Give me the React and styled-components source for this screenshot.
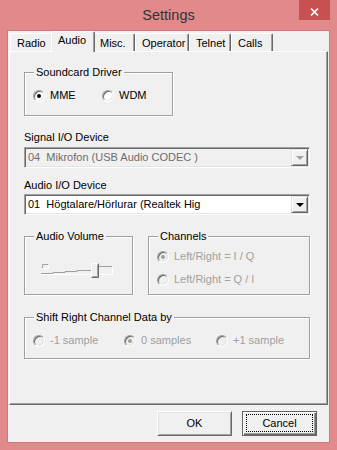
import React from 'react'
import styled, { createGlobalStyle } from 'styled-components'

const GlobalStyle = createGlobalStyle`
  html, body {
    margin: 0;
    padding: 0;
    background: #e1898b;
  }
  * {
    box-sizing: border-box;
  }
`

const Window = styled.div`
  width: 337px;
  height: 450px;
  display: flex;
  flex-direction: column;
  padding: 0 8px 8px 8px;
  background: #e1898b;
  font-family: "Liberation Sans", Arial, sans-serif;
  font-size: 11px;
  color: #000;
`

const TitleBar = styled.div`
  height: 31px;
  display: grid;
  grid-template-columns: 1fr auto 1fr;
  align-items: start;
`

const Title = styled.div`
  grid-column: 2;
  font-size: 14.5px;
  line-height: 17px;
  padding-top: 7px;
  color: #333;
`

const CloseButton = styled.div`
  grid-column: 3;
  justify-self: end;
  margin-right: -1px;
  width: 31px;
  height: 20px;
  background: #c75050;
  display: flex;
  justify-content: center;
  align-items: center;
  padding-top: 3px;
`

const Client = styled.div`
  flex: 1;
  display: flex;
  flex-direction: column;
  background: #f0f0f0;
  box-shadow: 0 0 0 1px #cf7779;
`

const TabRow = styled.div`
  height: 20px;
  display: flex;
  align-items: flex-end;
  padding-left: 2px;
`

const Tab = styled.div`
  position: relative;
  width: ${p => (p.$active ? p.$w + 4 : p.$w)}px;
  height: ${p => (p.$active ? 21 : 18)}px;
  margin: ${p => (p.$active ? '0 -2px -1px -2px' : '0')};
  z-index: ${p => (p.$active ? 2 : 1)};
  padding: ${p => (p.$active ? '2px 0 0 6px' : '3px 0 0 6px')};
  line-height: 13px;
  background: #f0f0f0;
  border-top: 1px solid #fff;
  border-left: 1px solid #fff;
  border-right: 1px solid #696969;
  border-top-left-radius: 2px;
  border-top-right-radius: 2px;
  box-shadow: inset -1px 0 0 #a0a0a0;
  white-space: nowrap;
`

const Panel = styled.div`
  flex: 1;
  margin: 0 1px;
  display: flex;
  flex-direction: column;
  padding: 20px 17px 0 14px;
  border-top: 1px solid #fff;
  border-left: 1px solid #fff;
  border-right: 1px solid #696969;
  border-bottom: 1px solid #696969;
  box-shadow: inset -1px -1px 0 #a0a0a0;
`

const Group = styled.div`
  position: relative;
  flex: ${p => (p.$grow ? 1 : 'none')};
  width: ${p => (p.$w ? `${p.$w}px` : 'auto')};
  height: ${p => p.$h}px;
  margin-top: ${p => p.$mt || 0}px;
  padding: ${p => p.$pad};
  border: 1px solid #a0a0a0;
  box-shadow: inset 1px 1px 0 #fff, 1px 1px 0 #fff;
  display: flex;
  flex-direction: ${p => (p.$col ? 'column' : 'row')};
  gap: ${p => p.$gap || 0}px;
`

const Legend = styled.span`
  position: absolute;
  top: -7px;
  left: 9px;
  padding: 0 2px;
  line-height: 13px;
  background: #f0f0f0;
  color: #000;
  white-space: nowrap;
`

const RadioItem = styled.label`
  display: flex;
  align-items: center;
  gap: 5px;
  width: ${p => (p.$w ? `${p.$w}px` : 'auto')};
  height: 13px;
  line-height: 13px;
  color: ${p => (p.$disabled ? '#a0a0a0' : '#000')};
  white-space: nowrap;
`

const RadioCircle = styled.span`
  flex: none;
  width: 12px;
  height: 12px;
  border-radius: 50%;
  border: 1px solid;
  border-color: #a0a0a0 #fff #fff #a0a0a0;
  box-shadow: inset 1px 1px 0 #696969, inset -1px -1px 0 #e3e3e3;
  background: ${p => (p.$disabled ? '#f0f0f0' : '#fff')};
  display: flex;
  align-items: center;
  justify-content: center;

  &::after {
    content: '';
    display: ${p => (p.$checked ? 'block' : 'none')};
    width: 4px;
    height: 4px;
    border-radius: 50%;
    background: ${p => (p.$disabled ? '#a0a0a0' : '#000')};
  }
`

const FieldLabel = styled.div`
  line-height: 13px;
  margin-top: ${p => p.$mt}px;
  white-space: nowrap;
`

const Combo = styled.div`
  display: flex;
  height: 21px;
  margin-top: ${p => p.$mt}px;
  padding: 1px;
  border: 1px solid;
  border-color: #a0a0a0 #fff #fff #a0a0a0;
  box-shadow: inset 1px 1px 0 #696969, inset -1px -1px 0 #e3e3e3;
  background: ${p => (p.$disabled ? '#f0f0f0' : '#fff')};
`

const ComboText = styled.div`
  flex: 1;
  padding-left: 2px;
  line-height: 17px;
  white-space: pre;
  overflow: hidden;
  color: ${p => (p.$disabled ? '#6d6d6d' : '#000')};
`

const ComboButton = styled.div`
  width: 17px;
  height: 17px;
  background: #f0f0f0;
  border: 1px solid;
  border-color: #e3e3e3 #696969 #696969 #e3e3e3;
  box-shadow: inset 1px 1px 0 #fff, inset -1px -1px 0 #a0a0a0;
  display: flex;
  align-items: center;
  justify-content: center;

  &::after {
    content: '';
    width: 0;
    height: 0;
    border-left: 4px solid transparent;
    border-right: 4px solid transparent;
    border-top: 4px solid ${p => (p.$disabled ? '#a0a0a0' : '#000')};
  }
`

const GroupRow = styled.div`
  display: flex;
  gap: 15px;
  margin-top: 21px;
`

const ButtonRow = styled.div`
  height: 37px;
  display: flex;
  justify-content: flex-end;
  align-items: center;
  gap: 10px;
  padding-right: 12px;
`

const Button = styled.div`
  position: relative;
  width: 75px;
  height: 25px;
  line-height: 23px;
  text-align: center;
  background: #f0f0f0;
  border: 1px solid;
  border-color: ${p => (p.$default ? '#646464' : '#fff #696969 #696969 #fff')};
  box-shadow: ${p =>
    p.$default
      ? 'inset 1px 1px 0 #fff, inset -1px -1px 0 #696969, inset -2px -2px 0 #a0a0a0'
      : 'inset 1px 1px 0 #e3e3e3, inset -1px -1px 0 #a0a0a0'};

  &::after {
    content: '';
    display: ${p => (p.$default ? 'block' : 'none')};
    position: absolute;
    inset: 2px 3px 3px 3px;
    border: 1px dotted #000;
  }
`

const radio = (label, opts = {}) => (
  <RadioItem $w={opts.w} $disabled={opts.disabled}>
    <RadioCircle $checked={opts.checked} $disabled={opts.disabled} />
    {label}
  </RadioItem>
)

const VolumeSlider = () => (
  <svg width="74" height="16" viewBox="0 0 74 16" style={{ marginLeft: 16, marginTop: 26 }}>
    <path d="M1.5 5.5 V1.5 H7.5" fill="none" stroke="#a0a0a0" />
    <path d="M7.5 1.5 V5.5 H1.5" fill="none" stroke="#fff" />
    <path d="M0 10.5 L12 10.5 L12 9.5 L24 9.5 L24 8.5 L36 8.5 L36 7.5 L50 7.5" fill="none" stroke="#a0a0a0" />
    <path d="M0 11.5 H50" fill="none" stroke="#fff" />
    <path d="M58 3.5 H71.5" fill="none" stroke="#a0a0a0" />
    <path d="M71.5 3.5 V11.5 H58" fill="none" stroke="#fff" />
    <rect x="50" y="0" width="8" height="15" fill="#f0f0f0" />
    <path d="M50.5 14.5 V0.5 H57.5" fill="none" stroke="#fff" />
    <path d="M57.5 0.5 V14.5 H50.5" fill="none" stroke="#696969" />
    <path d="M56.5 1.5 V13.5 H51.5" fill="none" stroke="#a0a0a0" />
  </svg>
)

const tabs = [
  { name: 'Radio', w: 43 },
  { name: 'Audio', w: 40, active: true },
  { name: 'Misc.', w: 42 },
  { name: 'Operator', w: 54 },
  { name: 'Telnet', w: 42 },
  { name: 'Calls', w: 42 },
]

const App = () => (
  <>
    <GlobalStyle />
    <Window>
      <TitleBar>
        <Title>Settings</Title>
        <CloseButton>
          <svg width="9" height="8" viewBox="0 0 9 8">
            <path d="M1 0.5 L8 7.5 M8 0.5 L1 7.5" stroke="#fff" strokeWidth="1.6" />
          </svg>
        </CloseButton>
      </TitleBar>
      <Client>
        <TabRow>
          {tabs.map(t => (
            <Tab key={t.name} $w={t.w} $active={t.active}>
              {t.name}
            </Tab>
          ))}
        </TabRow>
        <Panel>
          <Group $w={149} $h={44} $pad="16px 0 0 8px">
            <Legend>Soundcard Driver</Legend>
            {radio('MME', { w: 69, checked: true })}
            {radio('WDM')}
          </Group>

          <FieldLabel $mt={15}>Signal I/O Device</FieldLabel>
          <Combo $mt={3} $disabled>
            <ComboText $disabled>04  Mikrofon (USB Audio CODEC )</ComboText>
            <ComboButton $disabled />
          </Combo>

          <FieldLabel $mt={11}>Audio I/O Device</FieldLabel>
          <Combo $mt={2}>
            <ComboText>01  Högtalare/Hörlurar (Realtek Hig</ComboText>
            <ComboButton />
          </Combo>

          <GroupRow>
            <Group $w={109} $h={59} $pad="0">
              <Legend>Audio Volume</Legend>
              <VolumeSlider />
            </Group>
            <Group $grow $h={59} $col $gap={10} $pad="13px 0 0 8px">
              <Legend>Channels</Legend>
              {radio('Left/Right = I / Q', { checked: true, disabled: true })}
              {radio('Left/Right = Q / I', { disabled: true })}
            </Group>
          </GroupRow>

          <Group $h={42} $mt={22} $pad="16px 0 0 8px">
            <Legend>Shift Right Channel Data by</Legend>
            {radio('-1 sample', { w: 91, disabled: true })}
            {radio('0 samples', { w: 92, checked: true, disabled: true })}
            {radio('+1 sample', { disabled: true })}
          </Group>
        </Panel>
        <ButtonRow>
          <Button>OK</Button>
          <Button $default>Cancel</Button>
        </ButtonRow>
      </Client>
    </Window>
  </>
)

export default App
